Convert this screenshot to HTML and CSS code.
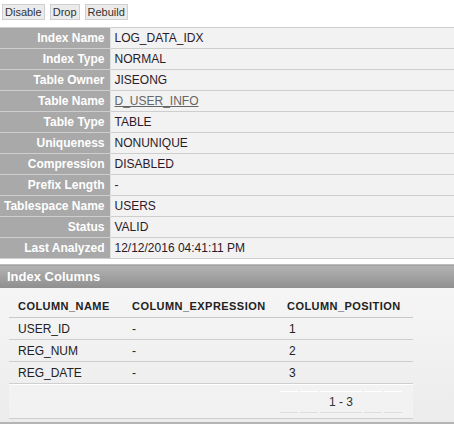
FILE: index.html
```html
<!DOCTYPE html>
<html>
<head>
<meta charset="utf-8">
<link rel="stylesheet" href="styles.css">
</head>
<body>
<div class="toolbar">
  <button class="btn">Disable</button>
  <button class="btn">Drop</button>
  <button class="btn">Rebuild</button>
</div>
<table class="props">
  <tr><th>Index Name</th><td>LOG_DATA_IDX</td></tr>
  <tr><th>Index Type</th><td>NORMAL</td></tr>
  <tr><th>Table Owner</th><td>JISEONG</td></tr>
  <tr><th>Table Name</th><td><a class="link">D_USER_INFO</a></td></tr>
  <tr><th>Table Type</th><td>TABLE</td></tr>
  <tr><th>Uniqueness</th><td>NONUNIQUE</td></tr>
  <tr><th>Compression</th><td>DISABLED</td></tr>
  <tr><th>Prefix Length</th><td>-</td></tr>
  <tr><th>Tablespace Name</th><td>USERS</td></tr>
  <tr><th>Status</th><td>VALID</td></tr>
  <tr><th>Last Analyzed</th><td>12/12/2016 04:41:11 PM</td></tr>
</table>
<div class="region">
  <div class="region-head">Index Columns</div>
  <div class="region-body">
    <table class="report">
      <thead>
        <tr><th class="c1">COLUMN_NAME</th><th class="c2">COLUMN_EXPRESSION</th><th class="c3">COLUMN_POSITION</th></tr>
      </thead>
      <tbody>
        <tr><td>USER_ID</td><td>-</td><td>1</td></tr>
        <tr><td>REG_NUM</td><td>-</td><td>2</td></tr>
        <tr><td>REG_DATE</td><td>-</td><td>3</td></tr>
      </tbody>
    </table>
    <div class="pager">
      <div class="pager-box">
        <div class="pager-lines"><span class="s1"></span><span class="s1"></span><span class="s2"></span><span class="s1"></span><span class="s1"></span></div>
        <div class="pager-text">1 - 3</div>
        <div class="pager-lines"><span class="s1"></span><span class="s1"></span><span class="s2"></span><span class="s1"></span><span class="s1"></span></div>
      </div>
    </div>
  </div>
</div>
</body>
</html>
```
FILE: styles.css
```css
html, body {
  margin: 0;
  padding: 0;
  background: #ffffff;
  font-family: "Liberation Sans", Arial, sans-serif;
}
.toolbar {
  display: flex;
  gap: 5px;
  padding: 4px 0 0 2px;
  height: 23px;
}
.btn {
  font-family: "Liberation Sans", Arial, sans-serif;
  font-size: 11px;
  color: #333;
  background: #ebebeb;
  border: 1px solid #cfcfcf;
  padding: 0 2px;
  height: 16px;
  line-height: 14px;
  margin: 0;
  border-radius: 0;
}
.props {
  width: 100%;
  border-collapse: collapse;
  font-size: 12px;
}
.props th, .props td {
  height: 20px;
  padding: 0 5px 0 4px;
  border-top: 1px solid #cecece;
}
.props tr:last-child th, .props tr:last-child td {
  border-bottom: 1px solid #cecece;
}
.props th {
  width: 97px;
  background: #a9a9a9;
  color: #fff;
  text-align: right;
  font-weight: bold;
  white-space: nowrap;
  border-right: 1px solid #e0e0e0;
}
.props td {
  background: #f2f2f2;
  color: #2a1a2a;
  text-align: left;
  padding-left: 4px;
}
.link {
  color: #666;
  text-decoration: underline;
}
.region {
  margin-top: 5px;
  border-top: 1px solid #bdbdbd;
  border-bottom: 2px solid #b4b4b4;
  background: linear-gradient(to bottom, #f7f7f7, #ececec);
}
.region-head {
  height: 22px;
  line-height: 22px;
  padding-left: 7px;
  font-size: 13px;
  font-weight: bold;
  color: #fff;
  background: linear-gradient(to bottom, #b3b3b3, #8f8f8f);
  border-top: 1px solid #a0a0a0;
}
.region-body {
  padding: 6px 0 3px 9px;
  width: 404px;
}
.report {
  width: 404px;
  border-collapse: collapse;
  font-size: 12px;
}
.report th {
  font-size: 11px;
  font-weight: bold;
  color: #222;
  text-align: left;
  height: 23px;
  padding: 0 0 0 9px;
  border-bottom: 1px solid #c8c8c8;
  letter-spacing: 0.45px;
}
.report th.c1 { width: 105px; }
.report th.c2 { width: 146px; }
.report td {
  height: 21px;
  padding: 0 0 0 9px;
  color: #222;
  border-bottom: 1px solid #cfcfcf;
}
.report td:nth-child(3) { padding-left: 11px; }
.pager {
  height: 33px;
  background: #f2f2f2;
  border-top: 1px solid #ffffff;
  border-bottom: 1px solid #cfcfcf;
  display: flex;
  justify-content: flex-end;
  align-items: center;
  padding-right: 11px;
}
.pager-box {
  display: flex;
  flex-direction: column;
}
.pager-lines {
  display: flex;
  gap: 2px;
}
.pager-lines span {
  height: 1px;
  background: #dedede;
}
.pager-lines:first-child span { background: #ffffff; }
.pager-lines .s1 { width: 18px; }
.pager-lines .s2 { width: 42px; }
.pager-text {
  text-align: center;
  font-size: 12px;
  color: #333;
  height: 20px;
  line-height: 20px;
}
```
